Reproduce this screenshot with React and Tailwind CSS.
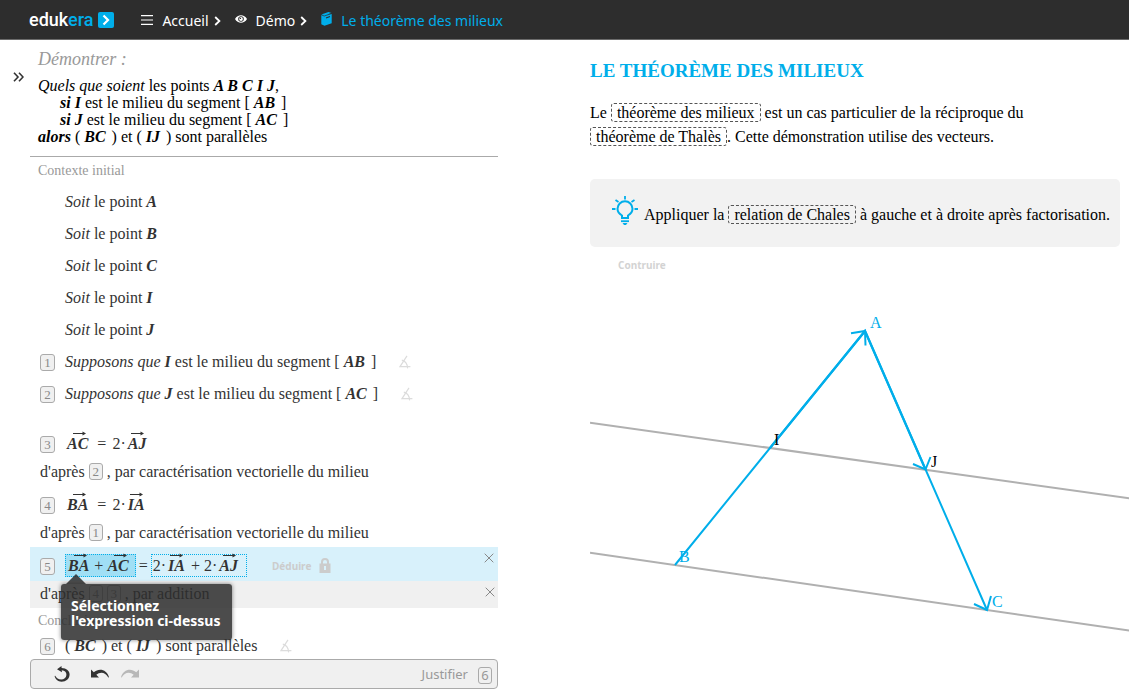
import React from "react";

const boxClass =
  "flex shrink-0 items-center justify-center rounded-[3px] border border-[#aaa] bg-[#f0f0f0] text-[13px] leading-none text-[#888]";

function Ref({ n }) {
  return <span className={`${boxClass} h-[17px] w-[14px]`}>{n}</span>;
}

function RowNumber({ n }) {
  return <span className={`${boxClass} mt-px h-[17px] w-[15px]`}>{n}</span>;
}

function B({ children }) {
  return <b className="font-bold italic">{children}</b>;
}

function Group({ children }) {
  return <b className="mr-[6px] font-bold italic">{children}</b>;
}

function Vec({ children }) {
  return (
    <span className="relative inline-block font-bold italic">
      {children}
      <svg
        className="absolute -top-[4px] right-px"
        width="14"
        height="5"
        viewBox="0 0 14 5"
        fill="none"
        aria-hidden="true"
      >
        <path d="M0 2.5H12" stroke="#333" strokeWidth="1" />
        <path d="M9.5 0.5L13 2.5L9.5 4.5Z" fill="#333" />
      </svg>
    </span>
  );
}

function Twice({ children }) {
  return (
    <>
      2·<span className="ml-[2px]"><Vec>{children}</Vec></span>
    </>
  );
}

function AngleIcon() {
  return (
    <svg width="12" height="14" viewBox="0 0 12 14" fill="none" stroke="#dcdcdc" strokeWidth="1.2" aria-hidden="true">
      <path d="M8 0.8L1 11.6H11.4" />
      <path d="M2.8 5.2C6 6 8.4 9 8.6 13.4" />
    </svg>
  );
}

function CloseButton({ className, label }) {
  return (
    <button type="button" aria-label={label} className={className}>
      <svg width="10" height="10" viewBox="0 0 10 10" stroke="#888" strokeWidth="1" aria-hidden="true">
        <path d="M0.7 0.7L9.3 9.3M9.3 0.7L0.7 9.3" />
      </svg>
    </button>
  );
}

function Chevron() {
  return (
    <svg width="7" height="10" viewBox="0 0 7 10" fill="none" stroke="#fff" strokeWidth="1.8" aria-hidden="true">
      <path d="M1.2 1L5.4 5L1.2 9" />
    </svg>
  );
}

function Header() {
  return (
    <header className="flex h-10 items-center border-b border-[#6b6b6b] bg-[#2d2d2d] pl-[29px] font-['Noto_Sans',sans-serif] text-[14px] text-white">
      <a href="#edukera" className="flex items-center gap-[5px]">
        <span className="font-['Roboto',sans-serif] text-[18px] leading-5 font-medium">
          eduk<span className="text-[#00aeea]">era</span>
        </span>
        <span className="flex h-4 w-4 items-center justify-center rounded-[2px] bg-[#00aeea]">
          <svg width="8" height="12" viewBox="0 0 8 12" fill="none" stroke="#fff" strokeWidth="2.2" aria-hidden="true">
            <path d="M1.5 1.5L6 6L1.5 10.5" />
          </svg>
        </span>
      </a>
      <nav className="ml-[27px] flex items-center pt-[2px]" aria-label="Fil d'Ariane">
        <a href="#accueil" className="flex items-center gap-[9px]">
          <svg width="12" height="10" viewBox="0 0 12 10" stroke="#fff" strokeWidth="1.2" className="mb-[2px]" aria-hidden="true">
            <path d="M0 0.6H12M0 5H12M0 9.4H12" />
          </svg>
          Accueil
        </a>
        <span className="ml-[5px] mr-[14px]"><Chevron /></span>
        <a href="#demo" className="flex items-center gap-[9px]">
          <svg width="12" height="8" viewBox="0 0 12 8" className="mb-[3px]" aria-hidden="true">
            <path
              fill="#fff"
              fillRule="evenodd"
              d="M0 4C1.5 1.4 3.6 0.2 6 0.2S10.500 1.400 12 4C10.500 6.600 8.400 7.800 6 7.800S1.500 6.600 0 4ZM6 1.200A2.800 2.800 0 1 0 6 6.800A2.800 2.800 0 1 0 6 1.200Z"
            />
            <circle cx="6" cy="4" r="1.900" fill="#fff" />
            <circle cx="5.400" cy="3.400" r="0.700" fill="#2d2d2d" />
          </svg>
          Démo
        </a>
        <span className="ml-[5px] mr-[14px]"><Chevron /></span>
        <a href="#theoreme" className="flex items-center gap-[9px] text-[#00aeea]">
          <svg width="11" height="14" viewBox="0 0 11 14" className="mb-[3px]" aria-hidden="true">
            <path fill="#00aeea" d="M0.300 2.400L7.500 0L10.600 0.900L3 3.500ZM0.300 3L10.700 2V11.200L3.500 13.700L0.300 12.200Z" />
            <path stroke="#2d2d2d" strokeWidth="0.700" fill="none" d="M0.300 2.900L3.200 4L10.700 1.500" />
            <path stroke="#2d2d2d" strokeWidth="1.100" d="M5 6L9 4.600" />
          </svg>
          Le théorème des milieux
        </a>
      </nav>
    </header>
  );
}

function Statement() {
  return (
    <section className="border-b border-[#aaa] pb-[11px] pl-2 pt-2 text-[16px] leading-[17px] text-black">
      <h2 className="mb-[7px] text-[18px] leading-[22px] text-[#999] italic">Démontrer :</h2>
      <p><i>Quels que soient</i> les points <B>A B C I J</B>,</p>
      <p className="pl-[22px]"><B>si I</B> est le milieu du segment [ <Group>AB</Group>]</p>
      <p className="pl-[22px]"><B>si J</B> est le milieu du segment [ <Group>AC</Group>]</p>
      <p><B>alors</B> ( <Group>BC</Group>) et ( <Group>IJ</Group>) sont parallèles</p>
    </section>
  );
}

function Formula({ n, children, className = "" }) {
  return (
    <div className={`relative flex h-[34px] items-center pl-[10px] pt-[3px] ${className}`}>
      <RowNumber n={n} />
      {children}
    </div>
  );
}

function Justification({ refs, text, className = "", children }) {
  return (
    <div className={`relative flex h-[27px] items-center pb-[2px] pl-[10px] ${className}`}>
      <span className="mr-1">d'après</span>
      <span className="flex gap-1">{refs.map((n) => <Ref key={n} n={n} />)}</span>
      <span className="ml-1">{text}</span>
      {children}
    </div>
  );
}

function Tooltip() {
  return (
    <div
      role="tooltip"
      className="absolute left-[31px] top-[37px] z-10 rounded-[3px] bg-[#2d2d2d]/85 pb-3 pl-[10px] pr-3 pt-[14px] font-['Noto_Sans',sans-serif] text-[14px] leading-[15px] font-bold whitespace-nowrap text-white shadow-[0_0_4px_rgba(0,0,0,0.5)]"
    >
      <span className="absolute -top-[10px] left-[5px] h-0 w-0 border-x-[10px] border-b-[10px] border-x-transparent border-b-[#2d2d2d]/85" />
      Sélectionnez
      <br />
      l'expression ci-dessus
    </div>
  );
}

function Proof() {
  return (
    <section className="text-[16px] leading-[18px] text-[#333]">
      <h3 className="pl-2 pt-[5px] text-[14px] leading-[18px] text-[#999]">Contexte initial</h3>
      <div className="mt-[6px]">
        {["A", "B", "C", "I", "J"].map((p) => (
          <p key={p} className="flex h-8 items-center pl-[35px]">
            <span><i>Soit</i> le point <B>{p}</B></span>
          </p>
        ))}
        {[["1", "I", "AB"], ["2", "J", "AC"]].map(([n, p, s]) => (
          <div key={n} className="flex h-8 items-center pl-[10px]">
            <RowNumber n={n} />
            <span className="ml-[10px] mr-[23px]">
              <i>Supposons que</i> <B>{p}</B> est le milieu du segment [ <Group>{s}</Group>]
            </span>
            <AngleIcon />
          </div>
        ))}
      </div>

      <div className="mt-[15px]">
        <Formula n="3">
          <span className="ml-3"><Vec>AC</Vec><span className="ml-[9px] mr-[6px]">=</span><Twice>AJ</Twice></span>
        </Formula>
        <Justification refs={["2"]} text=", par caractérisation vectorielle du milieu" />
        <Formula n="4">
          <span className="ml-3"><Vec>BA</Vec><span className="ml-[9px] mr-[6px]">=</span><Twice>IA</Twice></span>
        </Formula>
        <Justification refs={["1"]} text=", par caractérisation vectorielle du milieu" />
        <Formula n="5" className="bg-[#d8f1fb]">
          <button type="button" className="ml-[10px] h-[23px] border border-dotted border-[#00aeea] bg-[#a0dff5] pl-[2px] pr-[6px]">
            <Vec>BA</Vec> <span className="ml-px">+</span> <Vec>AC</Vec>
          </button>
          <span className="mx-[3px]">=</span>
          <button type="button" className="h-[23px] border border-dotted border-[#00aeea] pl-px pr-[8px]">
            <Twice>IA</Twice> <span className="ml-[2px]">+</span> <Twice>AJ</Twice>
          </button>
          <button type="button" className="ml-[25px] flex items-center gap-2 font-['Noto_Sans',sans-serif] text-[10px] font-bold text-[#ccc]">
            Déduire
            <svg width="12" height="15" viewBox="0 0 12 15" aria-hidden="true">
              <path d="M3 6V4A3 3 0 0 1 9 4V6" fill="none" stroke="#ccc" strokeWidth="2" />
              <path fill="#ccc" fillRule="evenodd" d="M0.500 5.500H11.500V15H0.500ZM5 8V12H7V8Z" />
            </svg>
          </button>
          <CloseButton label="Supprimer la ligne 5" className="absolute right-1 top-[6px]" />
          <Tooltip />
        </Formula>
        <Justification refs={["4", "3"]} text=", par addition" className="bg-[#f0f0f0]">
          <CloseButton label="Supprimer la justification" className="absolute right-[3px] top-[6px]" />
        </Justification>
      </div>

      <h3 className="pl-2 pt-1 text-[14px] leading-[18px] text-[#999]">Conclusion</h3>
      <div className="mt-1 flex h-6 items-center pl-[10px]">
        <RowNumber n="6" />
        <span className="ml-[10px] mr-[23px]">
          ( <Group>BC</Group>) et ( <Group>IJ</Group>) sont parallèles
        </span>
        <AngleIcon />
      </div>
    </section>
  );
}

function Toolbar() {
  return (
    <footer className="mt-px flex h-[30px] items-center rounded-[4px] border border-[#aaa] bg-[#f0f0f0] pl-[23px] pr-[5px] font-['Noto_Sans',sans-serif] text-[13px] text-[#999]">
      <button type="button" aria-label="Recommencer">
        <svg width="17" height="16" viewBox="0 0 17 16" aria-hidden="true">
          <path fill="#333" d="M7.500 0L3 3.200L8 6.200L7.700 4.200C11 4.300 12.600 6.600 12.400 9C12.100 11.800 10 13.500 7.200 13.500C4.500 13.500 2.300 12 1.200 9.800L0.600 10.100C1.300 13.500 4 15.700 7.500 15.700C12 15.700 15.500 12.800 15.600 8.500C15.700 5 12.500 2 7.600 1.900Z" />
        </svg>
      </button>
      <button type="button" aria-label="Annuler" className="ml-5">
        <svg width="18" height="10" viewBox="0 0 18 10" aria-hidden="true">
          <path fill="#333" d="M0 0.500V8.500H8L5.300 5.800C9 2.500 14.500 3 17.300 8.500L18 8.200C16 0.500 8 -1.500 2.800 3.300Z" />
        </svg>
      </button>
      <button type="button" aria-label="Rétablir" className="ml-3">
        <svg width="18" height="10" viewBox="0 0 18 10" aria-hidden="true">
          <path fill="#b8b8b8" d="M18 0.500V8.500H10L12.700 5.800C9 2.500 3.500 3 0.700 8.500L0 8.200C2 0.500 10 -1.500 15.200 3.300Z" />
        </svg>
      </button>
      <button type="button" className="ml-auto flex items-center gap-[10px] pt-[2px]">
        Justifier
        <span className="flex h-[17px] w-[14px] items-center justify-center rounded-[3px] border border-[#aaa] leading-none">6</span>
      </button>
    </footer>
  );
}

function Term({ children }) {
  return (
    <a href="#definition" className="inline-block rounded-[3px] border border-dashed border-[#555] px-[5px] leading-[17px]">
      {children}
    </a>
  );
}

function Figure() {
  return (
    <svg className="mt-[7px] h-[400px] w-full" role="img" aria-label="Triangle ABC et milieux I et J">
      <g stroke="#b0b0b0" strokeWidth="2">
        <path d="M0 142.800L2000 422.800" />
        <path d="M0 272.800L2000 561.300" />
      </g>
      <g stroke="#00aeea" strokeWidth="2" fill="none">
        <path d="M85 285L275 51L397 330" />
        <path d="M180 168L275 51L335.500 189.500" strokeWidth="2.300" />
        <path d="M261 53.300L275 51L275.500 65.500" />
        <path d="M323 184L335.500 189.500L340.500 177" />
        <path d="M384 324L397 330L401 316" />
      </g>
      <g className="font-['Liberation_Serif',serif] text-[16px]" fill="#00aeea">
        <text x="280" y="48">A</text>
        <text x="89" y="282">B</text>
        <text x="402" y="327">C</text>
      </g>
      <g className="font-['Liberation_Serif',serif] text-[16px]" fill="#000">
        <text x="184" y="165">I</text>
        <text x="341" y="187">J</text>
      </g>
    </svg>
  );
}

function Lesson() {
  return (
    <article className="min-w-0 pl-[92px] pt-5 text-[16px] text-black">
      <h1 className="text-[19px] leading-[22px] font-bold text-[#00aeea]">LE THÉORÈME DES MILIEUX</h1>
      <p className="mt-[19px] max-w-[460px] leading-6">
        Le <Term>théorème des milieux</Term> est un cas particulier de la réciproque du{" "}
        <Term>théorème de Thalès</Term>. Cette démonstration utilise des vecteurs.
      </p>
      <div className="mr-[9px] mt-[30px] flex h-[68px] items-center rounded-[5px] bg-[#f2f2f2] pl-[22px]">
        <svg width="26" height="29" viewBox="0 0 26 29" className="mb-[6px] mr-[6px] shrink-0" fill="none" stroke="#00aeea" strokeWidth="2" aria-hidden="true">
          <path d="M13 0V3.500M0 13H3.500M22.500 13H26M3.500 4L6.500 6M22.500 4L19.500 6" strokeWidth="1.800" />
          <path d="M10 22V19.500C7.500 18 5.500 16 5.500 12.800A7.500 7.500 0 0 1 20.500 12.800C20.500 16 18.500 18 16 19.500V22Z" />
          <path d="M9 25.200H17" strokeWidth="1.800" />
          <path d="M10.500 27H15.500L14 29H12Z" fill="#00aeea" stroke="none" />
        </svg>
        <p className="mt-1 whitespace-nowrap">
          Appliquer la <Term>relation de Chales</Term> à gauche et à droite après factorisation.
        </p>
      </div>
      <button type="button" className="ml-7 mt-[10px] block font-['Noto_Sans',sans-serif] text-[10px] leading-4 font-bold text-[#d3d3d3]">
        Contruire
      </button>
      <Figure />
    </article>
  );
}

export default function App() {
  return (
    <div className="bg-white font-['Liberation_Serif',serif]">
      <Header />
      <main className="grid grid-cols-[498fr_631fr]">
        <div className="flex min-w-0">
          <div className="w-[30px] shrink-0 pl-[13px] pt-[25px]">
            <button type="button" aria-label="Ouvrir le panneau">
              <svg width="11" height="10" viewBox="0 0 11 10" fill="none" stroke="#333" strokeWidth="1.600" aria-hidden="true">
                <path d="M1 0.800L5 5L1 9.200M6 0.800L10 5L6 9.200" />
              </svg>
            </button>
          </div>
          <div className="min-w-0 flex-1">
            <Statement />
            <Proof />
            <Toolbar />
          </div>
        </div>
        <Lesson />
      </main>
    </div>
  );
}
